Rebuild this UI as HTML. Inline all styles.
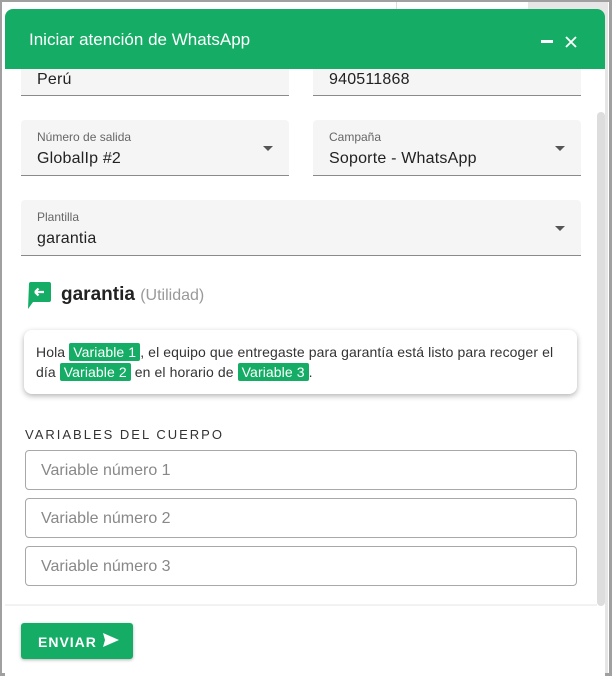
<!DOCTYPE html>
<html><head><meta charset="utf-8"><style>
*{box-sizing:border-box;margin:0;padding:0}
body{width:612px;height:676px;overflow:hidden;background:#fff;font-family:"Liberation Sans",sans-serif;position:relative}
.frame{position:absolute;inset:0;border:2px solid #a0a0a0;border-right-width:3px;border-bottom-width:3px}
.bgr{position:absolute;left:528px;top:2px;width:80px;height:674px;background:#e6e6e6}
.dlg{position:absolute;left:5px;top:9px;width:600px;height:667px;background:#fff;border-radius:8px 8px 0 0;overflow:hidden}
.hdr{position:absolute;left:0;top:0;width:600px;height:60px;background:#15ad66;color:#fff;font-size:17px;padding:21px 0 0 24px;z-index:2}
.field{position:absolute;background:#f5f5f5;border-bottom:1px solid #8a8a8a;border-radius:4px 4px 0 0}
.lab{position:absolute;left:16px;top:10px;font-size:12px;color:#666}
.val{position:absolute;left:16px;font-size:16px;color:#222;letter-spacing:.2px}
.arr{position:absolute;right:16px;top:26px;width:0;height:0;border-left:5px solid transparent;border-right:5px solid transparent;border-top:5px solid #555}
.chip{background:#15ad66;color:#fff;padding:1px 4px;border-radius:2px}
.inp{position:absolute;left:20px;width:552px;height:40px;border:1px solid #a8a8a8;border-radius:4px;font-size:16px;color:#888;padding:11px 0 0 15px}
</style></head><body>
<div class="bgr"></div>
<div style="position:absolute;left:396px;top:2px;width:1px;height:8px;background:#ddd"></div>
<div class="frame"></div>
<div class="dlg">
<div class="hdr">Iniciar atención de WhatsApp
<div style="position:absolute;left:536px;top:31px;width:12px;height:3px;background:#fff"></div>
<svg style="position:absolute;left:560px;top:27px" width="12" height="12" viewBox="0 0 12 12"><path d="M1 1L11 11M11 1L1 11" stroke="#fff" stroke-width="1.8"/></svg>
</div>
<div class="field" style="left:16px;top:40px;width:268px;height:47px"><div class="val" style="top:22px">Perú</div></div>
<div class="field" style="left:308px;top:40px;width:268px;height:47px"><div class="val" style="top:22px">940511868</div></div>
<div class="field" style="left:16px;top:111px;width:268px;height:56px"><div class="lab">Número de salida</div><div class="val" style="top:30px">GlobalIp #2</div><div class="arr"></div></div>
<div class="field" style="left:308px;top:111px;width:268px;height:56px"><div class="lab">Campaña</div><div class="val" style="top:30px">Soporte - WhatsApp</div><div class="arr"></div></div>
<div class="field" style="left:16px;top:191px;width:560px;height:56px"><div class="lab">Plantilla</div><div class="val" style="top:30px">garantia</div><div class="arr"></div></div>
<svg style="position:absolute;left:22px;top:273px" width="26" height="27" viewBox="0 0 26 27"><path d="M2 2Q2 0 4 0H22Q24 0 24 2V18Q24 20 22 20H6L1 27Z" fill="#15ad66"/><path d="M8 10H17M8 10L11.5 6.5M8 10L11.5 13.5" stroke="#fff" stroke-width="2.2" fill="none"/></svg>
<div style="position:absolute;left:56px;top:275px;font-size:19px;font-weight:bold;color:#222">garantia <span style="font-weight:normal;font-size:16px;color:#999">(Utilidad)</span></div>
<div style="position:absolute;left:19px;top:321px;width:553px;height:64px;border-radius:8px;box-shadow:0 2px 6px rgba(0,0,0,.3);font-size:14px;color:#333;line-height:20px;padding:12px 12px 0 12px;letter-spacing:.1px">Hola <span class="chip">Variable 1</span>, el equipo que entregaste para garantía está listo para recoger el día <span class="chip">Variable 2</span> en el horario de <span class="chip">Variable 3</span>.</div>
<div style="position:absolute;left:20px;top:418px;font-size:13px;letter-spacing:2px;color:#333">VARIABLES DEL CUERPO</div>
<div class="inp" style="top:441px">Variable número 1</div>
<div class="inp" style="top:489px">Variable número 2</div>
<div class="inp" style="top:537px">Variable número 3</div>
<div style="position:absolute;left:592px;top:103px;width:8px;height:494px;background:#ddd;border-radius:4px"></div>
<div style="position:absolute;left:0;top:595px;width:592px;height:2px;background:#f2f2f2"></div>
<div style="position:absolute;left:16px;top:614px;width:112px;height:36px;background:#15ad66;border-radius:3px;box-shadow:0 1px 3px rgba(0,0,0,.3);color:#fff;font-weight:bold;font-size:14px;letter-spacing:1px;padding:11px 0 0 17px">ENVIAR
<svg style="position:absolute;left:82px;top:10px" width="16" height="14" viewBox="0 0 16 14"><path d="M0 0L16 7L0 14L2 7ZM2 7H9" fill="#fff"/></svg></div>
</div>
</body></html>
